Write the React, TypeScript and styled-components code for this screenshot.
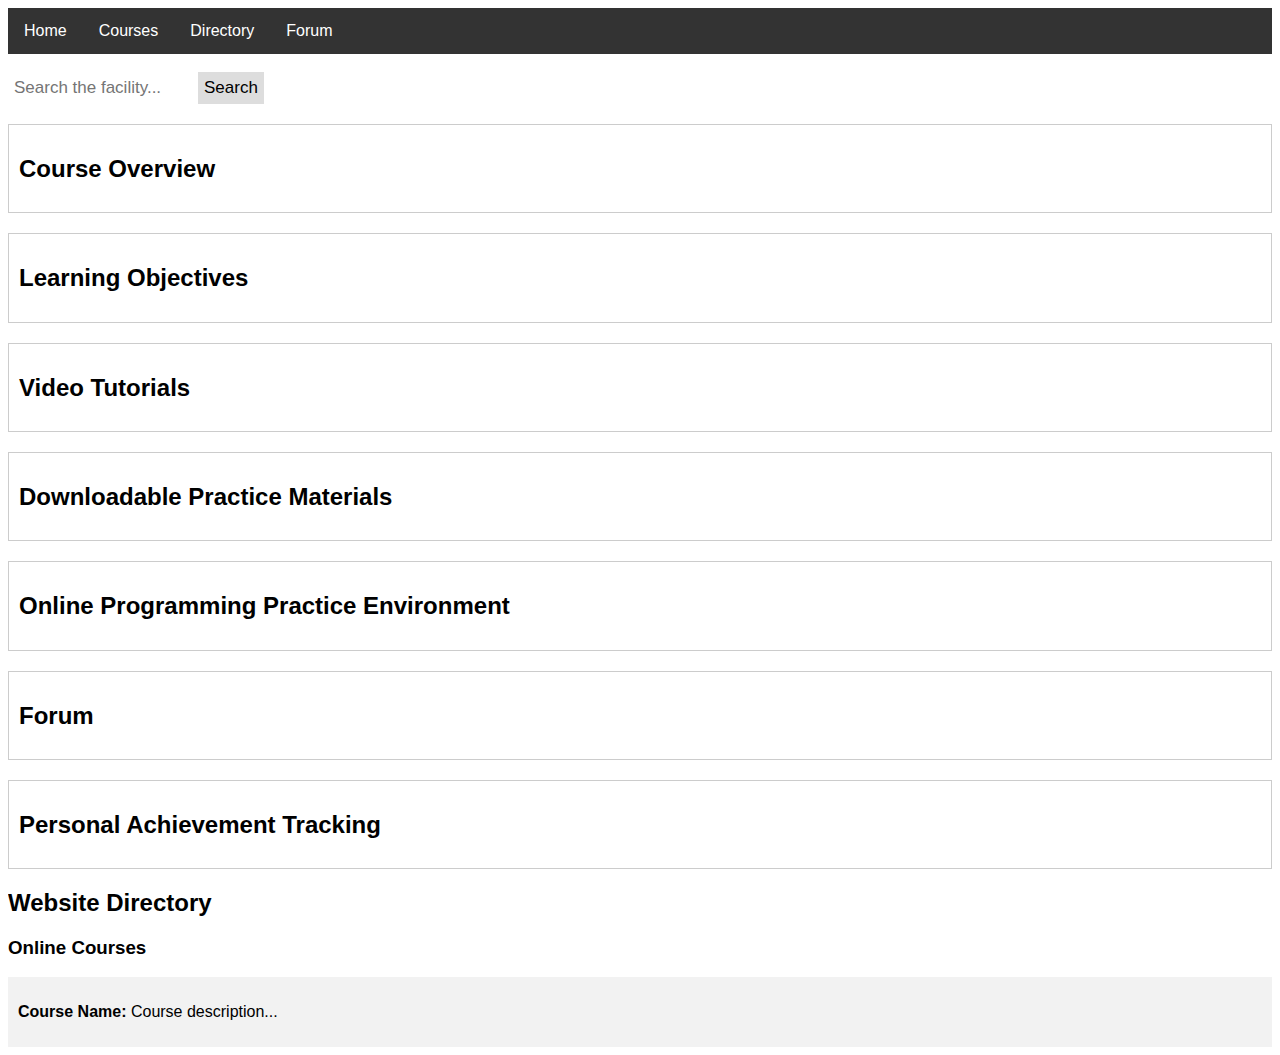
import React from "react";
import styled, { createGlobalStyle } from "styled-components";

const Global = createGlobalStyle`
  body {
    margin: 8px;
    font-family: "Liberation Sans", Arial, sans-serif;
    color: #000;
    background: #fff;
  }
`;

const Nav = styled.nav`
  display: flex;
  background: #333;
`;

const NavLink = styled.a`
  display: block;
  color: #fff;
  text-decoration: none;
  font-size: 16px;
  padding: 14px 16px;
`;

const SearchForm = styled.form`
  display: flex;
  align-items: center;
  gap: 8px;
  margin: 18px 0 20px;
`;

const SearchInput = styled.input`
  font-family: "Liberation Sans", Arial, sans-serif;
  font-size: 17px;
  padding: 6px;
  border: none;
  width: 170px;
  outline: none;
  &::placeholder {
    color: #757575;
  }
`;

const SearchButton = styled.button`
  font-family: "Liberation Sans", Arial, sans-serif;
  font-size: 17px;
  padding: 6px;
  border: none;
  background: #ddd;
  color: #000;
`;

const Section = styled.section`
  border: 1px solid #ccc;
  padding: 10px;
  margin-bottom: 20px;
`;

const H2 = styled.h2`
  font-size: 24px;
  line-height: 27.33px;
  font-weight: bold;
  margin: 20px 0;
`;

const H3 = styled.h3`
  font-size: 18.72px;
  line-height: 21.5px;
  font-weight: bold;
  margin: 18.72px 0;
`;

const CourseItem = styled.div`
  background: #f2f2f2;
  padding: 10px;
  p {
    margin: 16px 0;
    font-size: 16px;
    line-height: 18px;
  }
`;

const sections = [
  "Course Overview",
  "Learning Objectives",
  "Video Tutorials",
  "Downloadable Practice Materials",
  "Online Programming Practice Environment",
  "Forum",
  "Personal Achievement Tracking",
];

export default function App() {
  return (
    <>
      <Global />
      <Nav>
        {["Home", "Courses", "Directory", "Forum"].map((l) => (
          <NavLink key={l} href="#">
            {l}
          </NavLink>
        ))}
      </Nav>
      <SearchForm onSubmit={(e) => e.preventDefault()}>
        <SearchInput placeholder="Search the facility..." />
        <SearchButton type="submit">Search</SearchButton>
      </SearchForm>
      {sections.map((s) => (
        <Section key={s}>
          <H2>{s}</H2>
        </Section>
      ))}
      <H2>Website Directory</H2>
      <H3>Online Courses</H3>
      <CourseItem>
        <p>
          <strong>Course Name:</strong> Course description...
        </p>
      </CourseItem>
    </>
  );
}
